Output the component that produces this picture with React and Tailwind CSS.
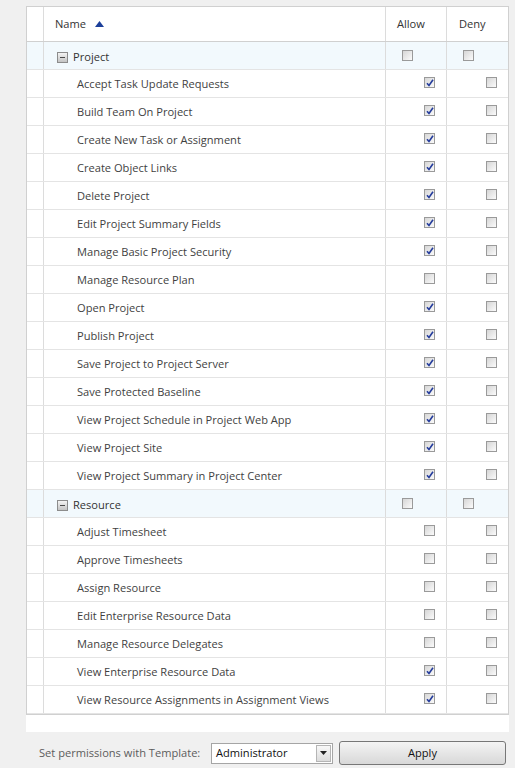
import React from "react";

const groups = [
  {
    name: "Project",
    items: [
      ["Accept Task Update Requests", true],
      ["Build Team On Project", true],
      ["Create New Task or Assignment", true],
      ["Create Object Links", true],
      ["Delete Project", true],
      ["Edit Project Summary Fields", true],
      ["Manage Basic Project Security", true],
      ["Manage Resource Plan", false],
      ["Open Project", true],
      ["Publish Project", true],
      ["Save Project to Project Server", true],
      ["Save Protected Baseline", true],
      ["View Project Schedule in Project Web App", true],
      ["View Project Site", true],
      ["View Project Summary in Project Center", true],
    ],
  },
  {
    name: "Resource",
    items: [
      ["Adjust Timesheet", false],
      ["Approve Timesheets", false],
      ["Assign Resource", false],
      ["Edit Enterprise Resource Data", false],
      ["Manage Resource Delegates", false],
      ["View Enterprise Resource Data", true],
      ["View Resource Assignments in Assignment Views", true],
    ],
  },
];

const Check = ({ checked }) => (
  <span className="relative inline-block w-[11px] h-[11px] border border-[#9a9a9a] bg-gradient-to-br from-[#d6d6d6] to-[#fbfbfb]">
    {checked && (
      <svg className="absolute left-[1px] top-[1px]" width="8" height="8" viewBox="0 0 8 8">
        <path d="M1 4.2 L3 6.5 L7 0.8" fill="none" stroke="#243c9c" strokeWidth="1.6" />
      </svg>
    )}
  </span>
);

const Minus = () => (
  <span className="relative inline-block w-[11px] h-[11px] border border-[#8c8c8c] bg-gradient-to-b from-[#f4f4f4] to-[#c4c4c4] mr-[5px]">
    <span className="absolute left-[2px] top-[4px] w-[5px] h-[1px] bg-[#4a4a4a]" />
  </span>
);

const cols = "grid grid-cols-[17px_342px_61px_61px]";

export default function App() {
  return (
    <div
      className="w-[515px] h-[768px] bg-[#f0f0f0] overflow-hidden text-[11.1px]"
      style={{ fontFamily: "'Open Sans', 'Liberation Sans', sans-serif" }}
    >
      <div className="h-[6px] overflow-hidden relative">
        <div className="absolute left-[40px] top-[-17px] text-[12px] text-[#666] whitespace-nowrap">
          Category: My Projects Category (Any)
        </div>
      </div>
      <div className="ml-[26px] w-[483px] h-[726px] bg-white">
        <div className="border border-[#d0d0d0]">
          <div className={`${cols} h-[35px] border-b border-[#d0d0d0] text-[#333]`}>
            <div className="border-r border-[#dcdcdc]" />
            <div className="border-r border-[#dcdcdc] flex items-center pl-[11px]">
              Name
              <svg className="ml-[9px]" width="9" height="6" viewBox="0 0 9 6">
                <path d="M0 6 L4.5 0 L9 6 Z" fill="#1c3f9a" />
              </svg>
            </div>
            <div className="border-r border-[#dcdcdc] flex items-center pl-[11px]">Allow</div>
            <div className="flex items-center pl-[12px]">Deny</div>
          </div>
          {groups.map((g) => (
            <React.Fragment key={g.name}>
              <div className={`${cols} h-[28px] border-b border-[#e4e4e4] bg-[#f2f9fd] text-[#333]`}>
                <div className="border-r border-[#dcdcdc]" />
                <div className="border-r border-[#dcdcdc] flex items-center pl-[13px] pt-[3px]">
                  <Minus />
                  {g.name}
                </div>
                <div className="border-r border-[#dcdcdc] flex items-center pl-[16px]">
                  <Check />
                </div>
                <div className="flex items-center pl-[16px]">
                  <Check />
                </div>
              </div>
              {g.items.map(([label, allow]) => (
                <div key={label} className={`${cols} h-[28px] border-b border-[#e4e4e4] text-[#3f3f3f]`}>
                  <div className="border-r border-[#dcdcdc]" />
                  <div className="border-r border-[#dcdcdc] flex items-center pl-[33px] pt-[1px]">{label}</div>
                  <div className="border-r border-[#dcdcdc] flex items-center justify-end pr-[11px] pb-[2px]">
                    <Check checked={allow} />
                  </div>
                  <div className="flex items-center justify-end pr-[11px] pb-[2px]">
                    <Check />
                  </div>
                </div>
              ))}
            </React.Fragment>
          ))}
        </div>
      </div>
      <div className="flex items-center h-[42px] pl-[39px]">
        <span className="text-[#5c5c5c] w-[172px] whitespace-nowrap">Set permissions with Template:</span>
        <div className="flex items-center w-[122px] h-[21px] border border-[#a5a5a5] bg-white text-[#111] pl-[4px] pr-[1px]">
          <span className="flex-1">Administrator</span>
          <div className="w-[15px] h-[17px] border border-[#b5b5b5] bg-gradient-to-b from-[#f8f8f8] to-[#dcdcdc] flex items-center justify-center">
            <svg width="7" height="4" viewBox="0 0 7 4">
              <path d="M0 0 L7 0 L3.5 4 Z" fill="#222" />
            </svg>
          </div>
        </div>
        <button className="ml-[6px] w-[167px] h-[24px] rounded-[3px] border border-[#777] bg-gradient-to-b from-[#f4f4f4] to-[#d8d8d8] text-[#111] font-medium">
          Apply
        </button>
      </div>
    </div>
  );
}
